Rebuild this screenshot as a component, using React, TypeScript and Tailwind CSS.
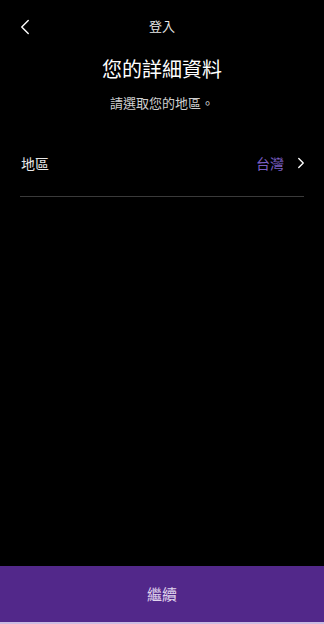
import { ChevronLeft, ChevronRight } from 'lucide-react';

const font = { fontFamily: '"Noto Sans CJK TC", "Noto Sans", sans-serif' };

export default function App() {
  return (
    <div className="w-[324px] h-[624px] bg-black text-white flex flex-col" style={font}>
      <div className="relative h-[52px] flex items-center justify-center">
        <button className="absolute left-[12px] top-[14px] text-white">
          <ChevronLeft className="h-[26px] w-[26px]" strokeWidth={1.3} />
        </button>
        <span className="text-[13px] text-[#e8e8e8]">登入</span>
      </div>
      <h1 className="mt-[3px] text-center text-[20px] leading-[28px] text-white">您的詳細資料</h1>
      <p className="mt-[11px] text-center text-[13px] leading-[18px] text-[#cfcfcf]">請選取您的地區。</p>

      <div className="mt-[31px] mx-[20px]">
        <div className="flex items-center justify-between h-[40px]">
          <span className="text-[14px] text-[#e8e8e8] pl-[1px]">地區</span>
          <div className="flex items-center gap-[8px]">
            <span className="text-[14px] text-[#7b5fc4]">台灣</span>
            <ChevronRight className="h-[18px] w-[18px] -mr-[6px] text-white" strokeWidth={1.8} />
          </div>
        </div>
        <div className="mt-[13px] h-px bg-[#3a3a3a]" />
      </div>

      <div className="flex-1" />
      <button className="h-[56px] w-full bg-[#52288a] text-[15px] text-[#e0d6ee]">繼續</button>
      <div className="h-[2px] bg-[#cbbde2]" />
    </div>
  );
}
